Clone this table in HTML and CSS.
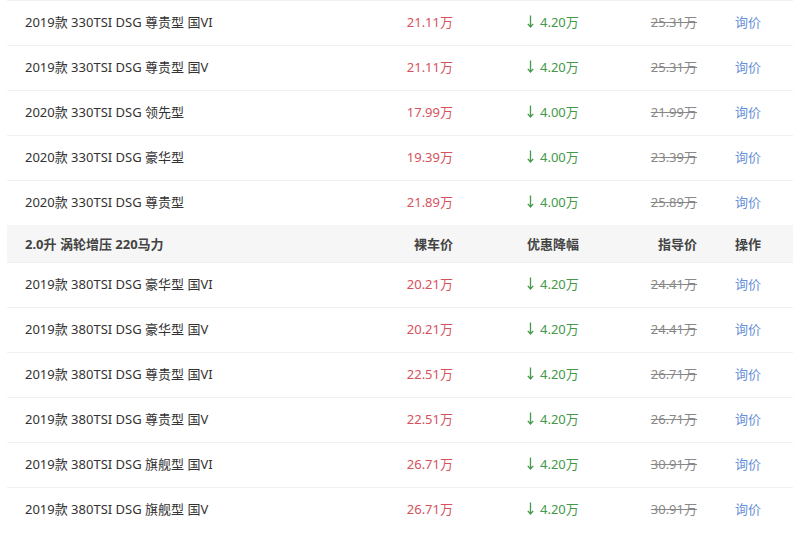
FILE: index.html
```html
<!DOCTYPE html>
<html lang="zh-CN">
<head>
<meta charset="utf-8">
<title>车型报价</title>
<link rel="stylesheet" href="styles.css">
</head>
<body>
<div class="table">
  <div class="row"><div class="c name">2019款 330TSI DSG 尊贵型 国VI</div><div class="c price">21.11万</div><div class="c disc"><svg class="arr" viewBox="0 0 7 13"><path d="M3.5 0.5V12M0.8 8.8L3.5 12L6.2 8.8"/></svg>4.20万</div><div class="c guide">25.31万</div><div class="c op">询价</div></div>
  <div class="row"><div class="c name">2019款 330TSI DSG 尊贵型 国V</div><div class="c price">21.11万</div><div class="c disc"><svg class="arr" viewBox="0 0 7 13"><path d="M3.5 0.5V12M0.8 8.8L3.5 12L6.2 8.8"/></svg>4.20万</div><div class="c guide">25.31万</div><div class="c op">询价</div></div>
  <div class="row"><div class="c name">2020款 330TSI DSG 领先型</div><div class="c price">17.99万</div><div class="c disc"><svg class="arr" viewBox="0 0 7 13"><path d="M3.5 0.5V12M0.8 8.8L3.5 12L6.2 8.8"/></svg>4.00万</div><div class="c guide">21.99万</div><div class="c op">询价</div></div>
  <div class="row"><div class="c name">2020款 330TSI DSG 豪华型</div><div class="c price">19.39万</div><div class="c disc"><svg class="arr" viewBox="0 0 7 13"><path d="M3.5 0.5V12M0.8 8.8L3.5 12L6.2 8.8"/></svg>4.00万</div><div class="c guide">23.39万</div><div class="c op">询价</div></div>
  <div class="row"><div class="c name">2020款 330TSI DSG 尊贵型</div><div class="c price">21.89万</div><div class="c disc"><svg class="arr" viewBox="0 0 7 13"><path d="M3.5 0.5V12M0.8 8.8L3.5 12L6.2 8.8"/></svg>4.00万</div><div class="c guide">25.89万</div><div class="c op">询价</div></div>
  <div class="row head"><div class="c name">2.0升 涡轮增压 220马力</div><div class="c price">裸车价</div><div class="c disc">优惠降幅</div><div class="c guide">指导价</div><div class="c op">操作</div></div>
  <div class="row first"><div class="c name">2019款 380TSI DSG 豪华型 国VI</div><div class="c price">20.21万</div><div class="c disc"><svg class="arr" viewBox="0 0 7 13"><path d="M3.5 0.5V12M0.8 8.8L3.5 12L6.2 8.8"/></svg>4.20万</div><div class="c guide">24.41万</div><div class="c op">询价</div></div>
  <div class="row"><div class="c name">2019款 380TSI DSG 豪华型 国V</div><div class="c price">20.21万</div><div class="c disc"><svg class="arr" viewBox="0 0 7 13"><path d="M3.5 0.5V12M0.8 8.8L3.5 12L6.2 8.8"/></svg>4.20万</div><div class="c guide">24.41万</div><div class="c op">询价</div></div>
  <div class="row"><div class="c name">2019款 380TSI DSG 尊贵型 国VI</div><div class="c price">22.51万</div><div class="c disc"><svg class="arr" viewBox="0 0 7 13"><path d="M3.5 0.5V12M0.8 8.8L3.5 12L6.2 8.8"/></svg>4.20万</div><div class="c guide">26.71万</div><div class="c op">询价</div></div>
  <div class="row"><div class="c name">2019款 380TSI DSG 尊贵型 国V</div><div class="c price">22.51万</div><div class="c disc"><svg class="arr" viewBox="0 0 7 13"><path d="M3.5 0.5V12M0.8 8.8L3.5 12L6.2 8.8"/></svg>4.20万</div><div class="c guide">26.71万</div><div class="c op">询价</div></div>
  <div class="row"><div class="c name">2019款 380TSI DSG 旗舰型 国VI</div><div class="c price">26.71万</div><div class="c disc"><svg class="arr" viewBox="0 0 7 13"><path d="M3.5 0.5V12M0.8 8.8L3.5 12L6.2 8.8"/></svg>4.20万</div><div class="c guide">30.91万</div><div class="c op">询价</div></div>
  <div class="row"><div class="c name">2019款 380TSI DSG 旗舰型 国V</div><div class="c price">26.71万</div><div class="c disc"><svg class="arr" viewBox="0 0 7 13"><path d="M3.5 0.5V12M0.8 8.8L3.5 12L6.2 8.8"/></svg>4.20万</div><div class="c guide">30.91万</div><div class="c op">询价</div></div>
</div>
</body>
</html>
```

FILE: styles.css
```css
html, body {
  margin: 0;
  padding: 0;
  background: #fff;
}
body {
  font-family: "Noto Sans", "Noto Sans CJK SC", sans-serif;
  font-size: 13px;
  color: #333;
}
.table {
  margin-left: 7px;
  width: 786px;
}
.row {
  display: grid;
  grid-template-columns: 393px 53px 147px 97px 96px;
  align-items: center;
  height: 45px;
  box-sizing: border-box;
  padding-bottom: 3px;
  border-top: 1px solid #f0f0f0;
}
.row.head {
  height: 37px;
  padding-bottom: 1px;
  border-top: none;
  background: #f6f6f6;
  font-weight: bold;
  color: #444;
}
.c {
  white-space: nowrap;
}
.name {
  padding-left: 18px;
}
.price {
  text-align: right;
  color: #d6525c;
}
.disc {
  padding-left: 74px;
  color: #44994a;
  display: flex;
  align-items: center;
}
.arr {
  width: 7px;
  height: 13px;
  margin-right: 6px;
  fill: none;
  stroke: #44994a;
  stroke-width: 1.3;
}
.guide {
  text-align: right;
  color: #888;
  text-decoration: line-through;
}
.op {
  padding-left: 38px;
  color: #6690d8;
}
.head .price, .head .disc, .head .guide, .head .op {
  color: #444;
  text-decoration: none;
}
```
